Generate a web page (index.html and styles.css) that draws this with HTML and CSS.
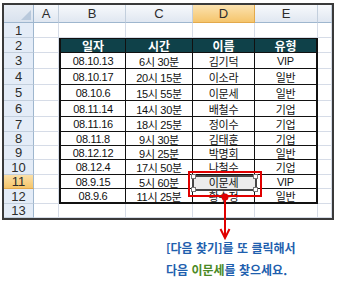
FILE: index.html
```html
<!DOCTYPE html>
<html lang="ko">
<head>
<meta charset="utf-8">
<link rel="stylesheet" href="styles.css">
</head>
<body>
<div class="sheet">
  <div class="corner"></div><div class="ch">A</div><div class="ch">B</div><div class="ch">C</div><div class="ch on">D</div><div class="ch">E</div><div class="ch"></div>

  <div class="rh">1</div><div class="c"></div><div class="c"></div><div class="c"></div><div class="c"></div><div class="c"></div><div class="c"></div>

  <div class="rh">2</div><div class="c"></div><div class="t th first">일자</div><div class="t th">시간</div><div class="t th">이름</div><div class="t th last">유형</div><div class="c"></div>

  <div class="rh">3</div><div class="c"></div><div class="t first">08.10.13</div><div class="t">6시 30분</div><div class="t">김기덕</div><div class="t last">VIP</div><div class="c"></div>
  <div class="rh">4</div><div class="c"></div><div class="t first">08.10.17</div><div class="t">20시 15분</div><div class="t">이소라</div><div class="t last">일반</div><div class="c"></div>
  <div class="rh">5</div><div class="c"></div><div class="t first">08.10.6</div><div class="t">15시 55분</div><div class="t">이문세</div><div class="t last">일반</div><div class="c"></div>
  <div class="rh">6</div><div class="c"></div><div class="t first">08.11.14</div><div class="t">14시 30분</div><div class="t">배철수</div><div class="t last">기업</div><div class="c"></div>
  <div class="rh">7</div><div class="c"></div><div class="t first">08.11.16</div><div class="t">18시 25분</div><div class="t">정이수</div><div class="t last">기업</div><div class="c"></div>
  <div class="rh">8</div><div class="c"></div><div class="t first">08.11.8</div><div class="t">9시 30분</div><div class="t">김태훈</div><div class="t last">기업</div><div class="c"></div>
  <div class="rh">9</div><div class="c"></div><div class="t first">08.12.12</div><div class="t">9시 25분</div><div class="t">박명회</div><div class="t last">일반</div><div class="c"></div>
  <div class="rh">10</div><div class="c"></div><div class="t first">08.12.4</div><div class="t">17시 50분</div><div class="t">나철수</div><div class="t last">기업</div><div class="c"></div>
  <div class="rh on">11</div><div class="c"></div><div class="t first">08.9.15</div><div class="t">5시 60분</div><div class="t act"><span class="sel"><i class="hd tl"></i><i class="hd tr"></i><i class="hd bl"></i><i class="hd br"></i></span><span class="val">이문세</span></div><div class="t last">VIP</div><div class="c"></div>
  <div class="rh">12</div><div class="c"></div><div class="t first bottom">08.9.6</div><div class="t bottom">11시 25분</div><div class="t bottom">황수정</div><div class="t last bottom">일반</div><div class="c"></div>

  <div class="rh">13</div><div class="c"></div><div class="c"></div><div class="c"></div><div class="c"></div><div class="c"></div><div class="c"></div>
</div>

<div class="callout"></div>
<svg class="pointer" width="20" height="52" viewBox="0 0 20 52">
  <line x1="10" y1="6" x2="10" y2="46" stroke="#e00000" stroke-width="2"/>
  <polyline points="5.5,38 10,47 14.5,38" fill="none" stroke="#e00000" stroke-width="2"/>
  <circle cx="10" cy="6" r="3.5" fill="#e00000"/>
</svg>

<div class="note">
  <p>[다음 찾기]를 또 클릭해서</p>
  <p>다음 <span class="hl">이문세</span>를 찾으세요.</p>
</div>
</body>
</html>
```
FILE: styles.css
```css
html, body {
  margin: 0;
  padding: 0;
  background: #ffffff;
}

body {
  width: 340px;
  height: 281px;
  position: relative;
  overflow: hidden;
  font-family: "Liberation Sans", "Noto Sans CJK KR", sans-serif;
}

.sheet {
  box-sizing: border-box;
  margin: 3px 0 0 2px;
  width: 332px;
  height: 217px;
  border: 2px solid #3a3a3a;
  overflow: hidden;
  display: grid;
  grid-template-columns: 30px 25px 67px 67px 62px 63px 1fr;
  grid-template-rows: 18px 15px 15px 16px 16px 16px 16px 15px 14px 14px 15px 14px 15px 14px;
  background: #ffffff;
}

.sheet > div {
  box-sizing: border-box;
  display: flex;
  align-items: center;
  justify-content: center;
  min-width: 0;
  overflow: hidden;
  white-space: nowrap;
}

.corner {
  background: linear-gradient(#e9eef5, #d9e2ee);
  border-right: 1px solid #9eb6ce;
  border-bottom: 1px solid #9eb6ce;
  position: relative;
}

.corner::after {
  content: "";
  position: absolute;
  right: 2px;
  bottom: 2px;
  width: 0;
  height: 0;
  border-left: 10px solid transparent;
  border-bottom: 10px solid #b9c9dc;
}

.ch {
  background: linear-gradient(#f7f9fc, #e0e7f1);
  border-right: 1px solid #c3cfdd;
  border-bottom: 1px solid #9eb6ce;
  font-size: 13px;
  color: #2c2c2c;
}

.ch.on {
  background: linear-gradient(#fbe2b0, #f5c56c);
  border-right-color: #e3a94b;
  border-bottom-color: #e3a94b;
}

.rh {
  background: #e4ecf7;
  border-right: 1px solid #9eb6ce;
  border-bottom: 1px solid #c3cfdd;
  font-size: 13px;
  color: #2c2c2c;
}

.rh.on {
  background: linear-gradient(#fbe0a8, #f5c56a);
  border-bottom-color: #e3a94b;
}

.c {
  border-right: 1px solid #d6dce7;
  border-bottom: 1px solid #d6dce7;
}

.t {
  border-right: 1px solid #111111;
  border-bottom: 1px solid #111111;
  font-size: 11px;
  color: #111111;
  letter-spacing: -0.3px;
}

.t.first {
  border-left: 2px solid #111111;
}

.t.last {
  border-right: 2px solid #111111;
}

.t.bottom {
  border-bottom: 2px solid #111111;
}

.th {
  background: #0f4149;
  border-top: 1px solid #111111;
  color: #ffffff;
  font-weight: bold;
  font-size: 12px;
  letter-spacing: 0;
}

.sheet > .act {
  position: relative;
  overflow: visible;
}

.sel {
  position: absolute;
  left: -1px;
  top: 0;
  right: -3px;
  bottom: -3px;
  border: 2px solid #464646;
  background: #ececec;
}

.val {
  position: relative;
}

.hd {
  position: absolute;
  width: 3px;
  height: 3px;
  background: #ffffff;
  border: 1px solid #777777;
}

.hd.tl { left: -3px; top: -3px; }
.hd.tr { right: -3px; top: -3px; }
.hd.bl { left: -3px; bottom: -3px; }
.hd.br { right: -3px; bottom: -3px; }

.callout {
  position: absolute;
  left: 188px;
  top: 171px;
  width: 74px;
  height: 26px;
  box-sizing: border-box;
  border: 2px solid #e00000;
}

.pointer {
  position: absolute;
  left: 215px;
  top: 191px;
}

.note {
  margin-top: 17px;
  padding-left: 166px;
  font-family: "Noto Sans CJK KR", sans-serif;
  font-weight: bold;
  font-size: 12px;
  line-height: 22px;
  color: #1f5fae;
}

.note p {
  margin: 0;
  white-space: nowrap;
}

.hl {
  color: #4b8a26;
}
```
